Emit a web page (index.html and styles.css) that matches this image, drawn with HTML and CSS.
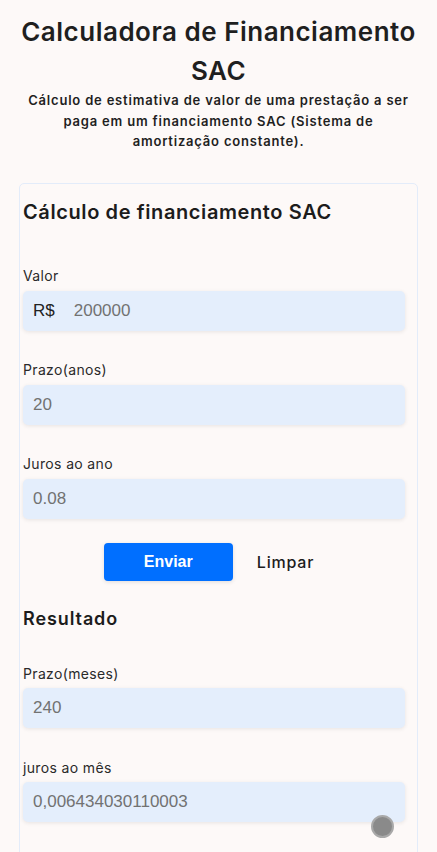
FILE: index.html
```html
<!DOCTYPE html>
<html lang="pt-BR">
<head>
<meta charset="utf-8">
<title>Calculadora de Financiamento SAC</title>
<link rel="stylesheet" href="styles.css">
</head>
<body>
<header class="intro">
  <h1 class="title">Calculadora de Financiamento SAC</h1>
  <p class="subtitle">Cálculo de estimativa de valor de uma prestação a ser paga em um financiamento SAC (Sistema de amortização constante).</p>
</header>
<main class="card">
  <h2 class="card-title">Cálculo de financiamento SAC</h2>
  <form class="form">
    <div class="field">
      <label class="label" for="valor">Valor</label>
      <div class="input-box">
        <span class="prefix">R$</span>
        <input class="input input-inner" id="valor" type="text" value="200000">
      </div>
    </div>
    <div class="field">
      <label class="label" for="prazo">Prazo(anos)</label>
      <input class="input input-box" id="prazo" type="text" value="20">
    </div>
    <div class="field">
      <label class="label" for="juros">Juros ao ano</label>
      <input class="input input-box" id="juros" type="text" value="0.08">
    </div>
    <div class="actions">
      <button class="btn-primary" type="button">Enviar</button>
      <button class="btn-link" type="reset">Limpar</button>
    </div>
  </form>
  <h3 class="result-title">Resultado</h3>
  <div class="result">
    <div class="field">
      <label class="label" for="meses">Prazo(meses)</label>
      <input class="input input-box" id="meses" type="text" value="240" readonly>
    </div>
    <div class="field">
      <label class="label" for="jm">juros ao mês</label>
      <input class="input input-box" id="jm" type="text" value="0,006434030110003" readonly>
    </div>
  </div>
</main>
<div class="float-dot"></div>
</body>
</html>
```

FILE: styles.css
```css
* { box-sizing: border-box; }

html, body {
  margin: 0;
  background: #fdf9f8;
}

body {
  padding: 0 19px;
  font-family: Inter, "Open Sans", "Liberation Sans", sans-serif;
  color: #1c1c1c;
  position: relative;
  height: 852px;
  overflow: hidden;
}

.intro {
  text-align: center;
}

.title {
  margin: 12px 0 0;
  font-size: 26px;
  line-height: 39px;
  font-weight: 600;
  letter-spacing: 0.5px;
  color: #1f1f1f;
}

.subtitle {
  margin: 0 auto;
  max-width: 396px;
  font-size: 13px;
  line-height: 20.5px;
  font-weight: 600;
  letter-spacing: 0.8px;
  color: #1f1f1f;
}

.card {
  margin-top: 31px;
  border: 1px solid #e3ecfa;
  border-radius: 5px;
  padding: 13px 12px 0 3px;
  height: 690px;
}

.card-title {
  margin: 0;
  font-size: 20px;
  line-height: 30px;
  font-weight: 600;
  letter-spacing: 0.6px;
  color: #1c1c1c;
}

.form {
  margin-top: 38.5px;
}

.field {
  display: flex;
  flex-direction: column;
  gap: 4.5px;
  margin-bottom: 28.5px;
}

.label {
  font-size: 14px;
  line-height: 21px;
  font-weight: 400;
  letter-spacing: 0.35px;
  color: #2a2a2a;
}

.input-box {
  display: flex;
  align-items: center;
  width: 382px;
  height: 40px;
  background: #e4eefc;
  border: none;
  border-radius: 5px;
  box-shadow: 0 1px 4px rgba(0, 0, 0, 0.09);
  padding: 0 10px;
}

.input {
  font-family: "Liberation Sans", Arial, sans-serif;
  font-size: 17px;
  color: #727272;
  outline: none;
}

.input-inner {
  flex: 1;
  min-width: 0;
  height: 100%;
  border: none;
  background: transparent;
  padding: 0 0 0 19px;
}

.prefix {
  font-family: "Liberation Sans", Arial, sans-serif;
  font-size: 17px;
  color: #222;
}

.actions {
  display: flex;
  justify-content: center;
  align-items: center;
  gap: 14px;
  margin-top: -4.5px;
  width: 382px;
}

.btn-primary {
  width: 129px;
  height: 38px;
  border: none;
  border-radius: 4px;
  background: #006fff;
  color: #fff;
  font-family: "Liberation Sans", Arial, sans-serif;
  font-weight: 700;
  font-size: 16px;
  box-shadow: 0 1px 4px rgba(0, 0, 0, 0.12);
}

.btn-link {
  height: 38px;
  border: none;
  background: transparent;
  padding: 0 10px;
  font-family: Inter, "Open Sans", sans-serif;
  font-weight: 500;
  font-size: 16px;
  letter-spacing: 0.8px;
  color: #1c1c1c;
}

.result-title {
  margin: 24.5px 0 0;
  font-size: 18px;
  line-height: 27px;
  font-weight: 600;
  letter-spacing: 0.9px;
  color: #1c1c1c;
}

.result {
  margin-top: 30.5px;
}

.float-dot {
  position: absolute;
  left: 371px;
  top: 815px;
  width: 23px;
  height: 23px;
  border-radius: 50%;
  background: #8a8a8a;
  border: 2px solid #a9a9a9;
}
```
